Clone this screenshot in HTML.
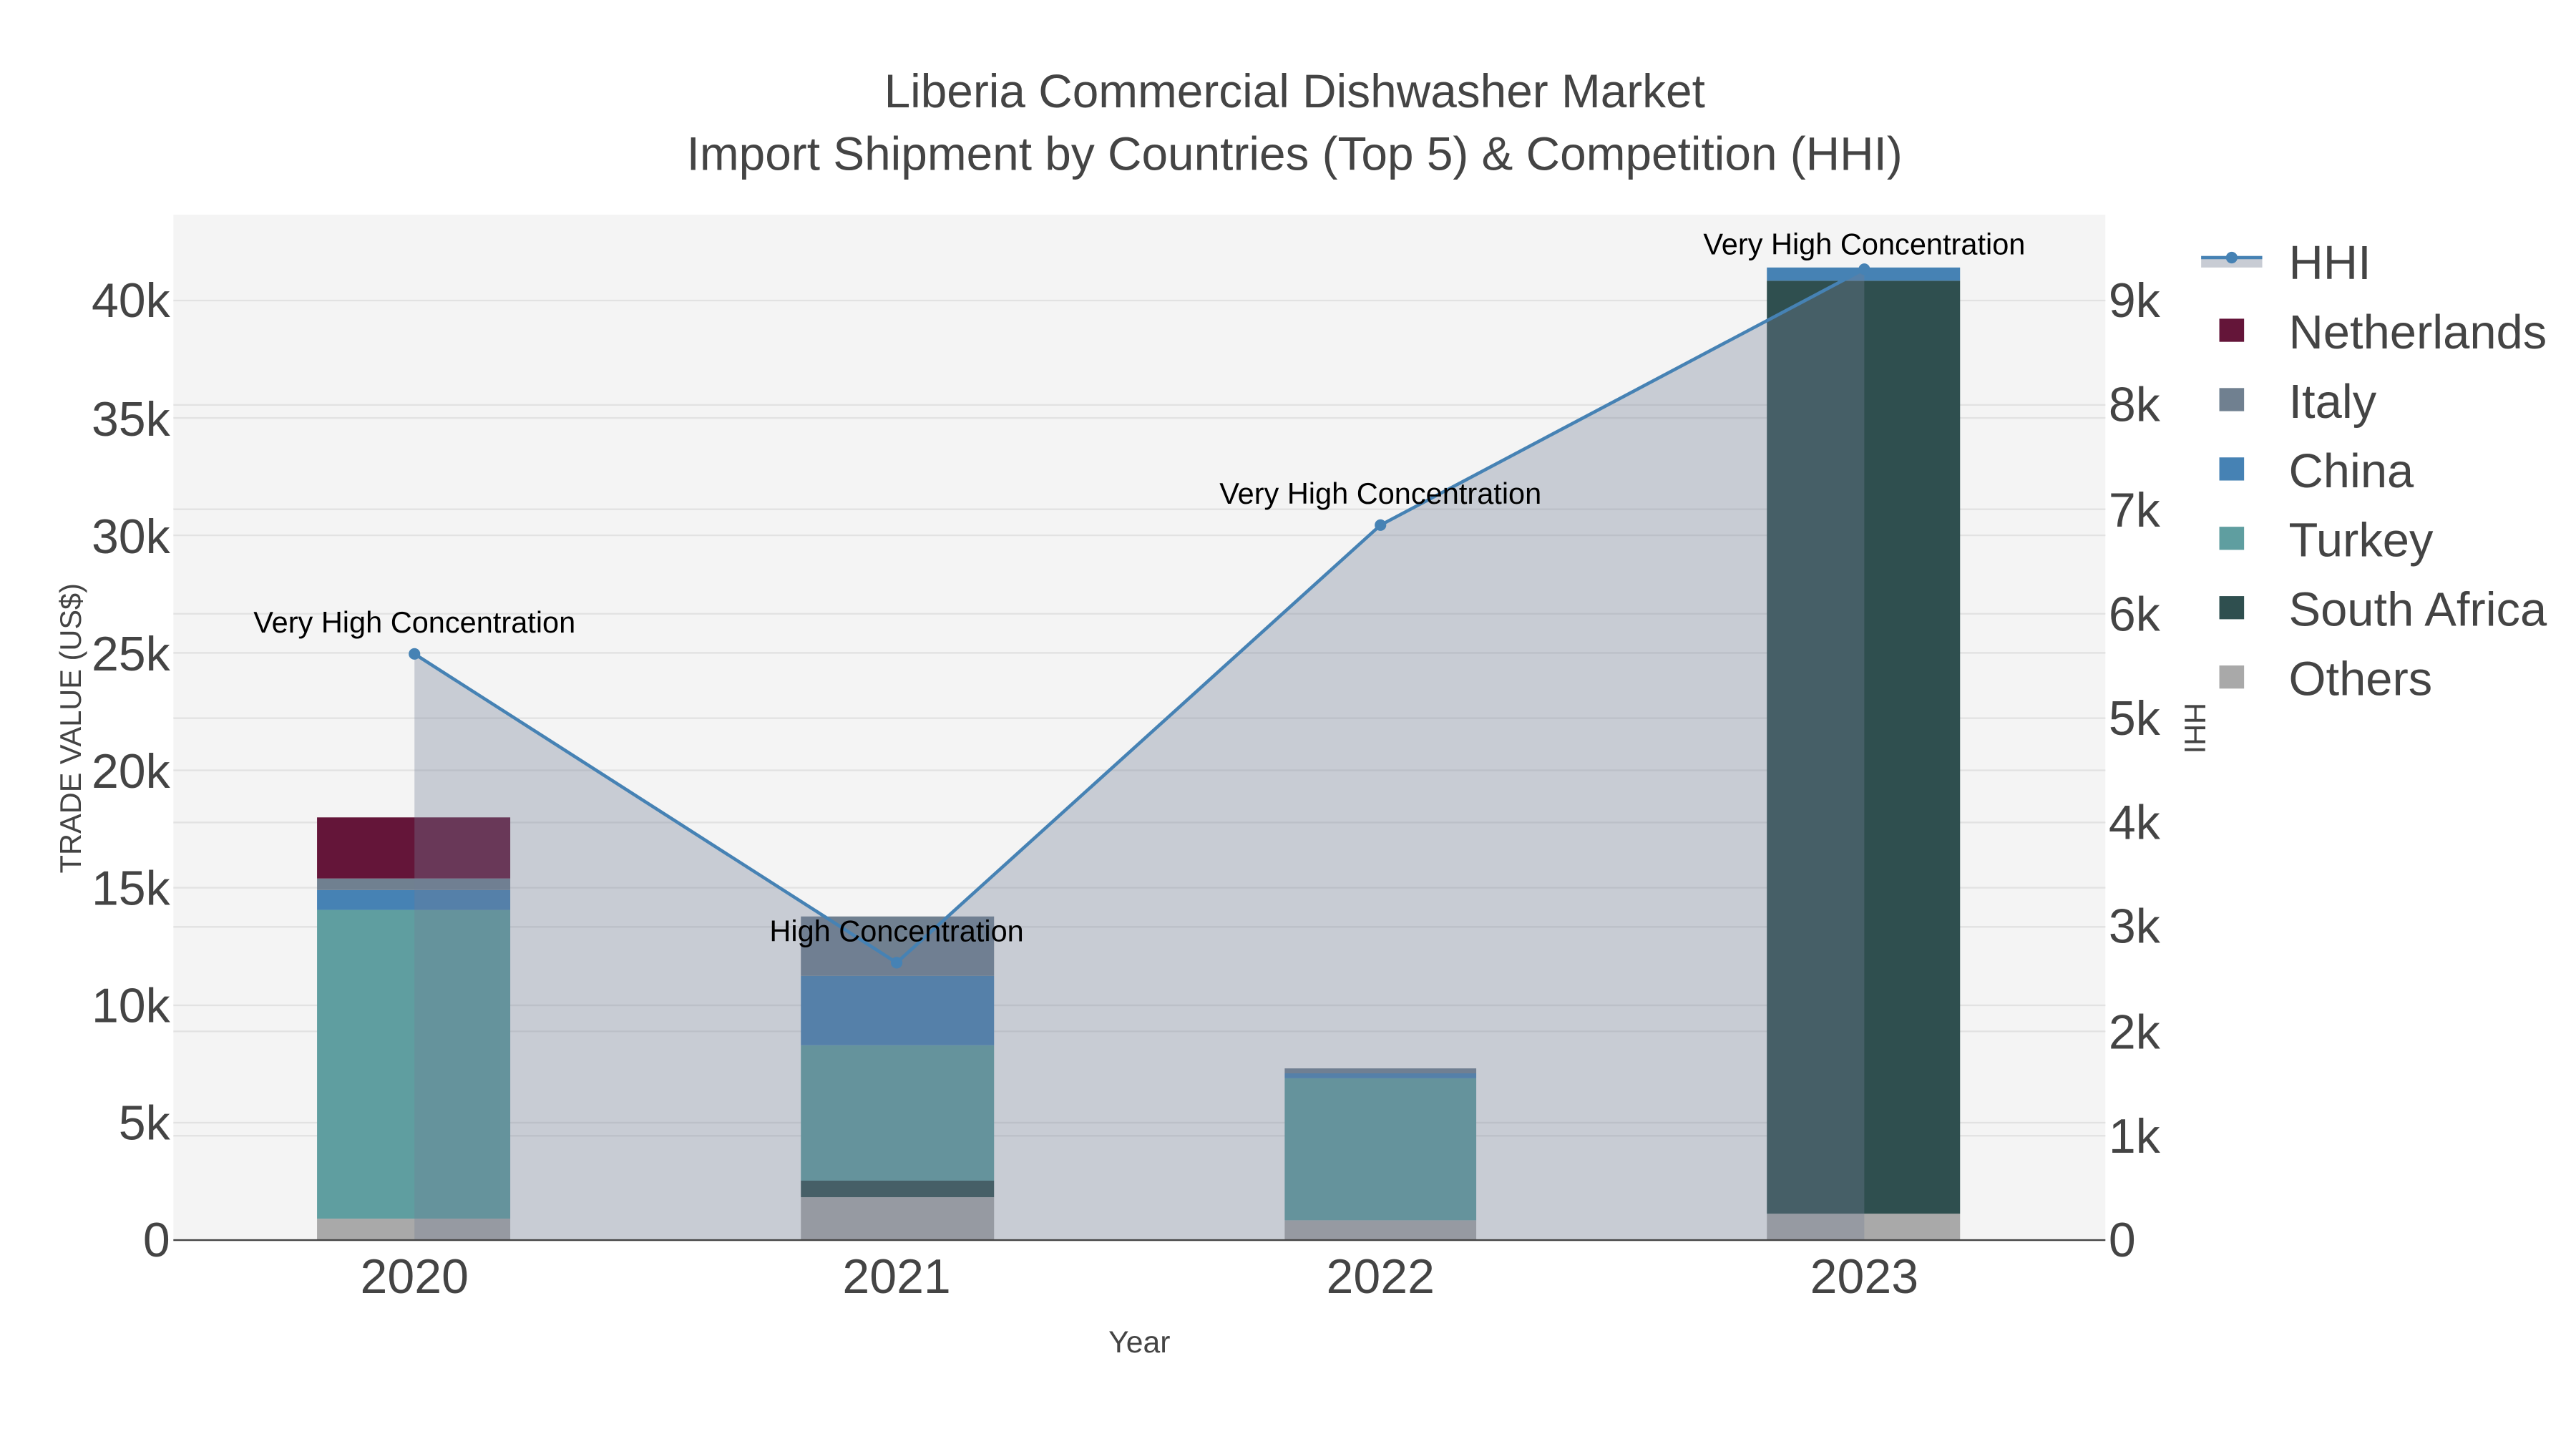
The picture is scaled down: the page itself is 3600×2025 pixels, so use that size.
<!DOCTYPE html>
<html><head><meta charset="utf-8"><style>html,body{margin:0;padding:0;background:#fff}svg{display:block}</style></head>
<body>
<svg width="3600" height="2025" viewBox="0 0 1560 877.5" xmlns="http://www.w3.org/2000/svg" font-family="Liberation Sans, sans-serif">
<rect width="1560" height="877.5" fill="#fff"/>
<rect x="105" y="130" width="1170" height="621" fill="#f4f4f4"/>
<g stroke="#e2e2e2" stroke-width="1">
<line x1="105" x2="1275" y1="679.9" y2="679.9"/><line x1="105" x2="1275" y1="608.8" y2="608.8"/><line x1="105" x2="1275" y1="537.6" y2="537.6"/><line x1="105" x2="1275" y1="466.5" y2="466.5"/><line x1="105" x2="1275" y1="395.4" y2="395.4"/><line x1="105" x2="1275" y1="324.2" y2="324.2"/><line x1="105" x2="1275" y1="253.1" y2="253.1"/><line x1="105" x2="1275" y1="182" y2="182"/>
<line x1="105" x2="1275" y1="687.8" y2="687.8"/><line x1="105" x2="1275" y1="624.6" y2="624.6"/><line x1="105" x2="1275" y1="561.3" y2="561.3"/><line x1="105" x2="1275" y1="498.1" y2="498.1"/><line x1="105" x2="1275" y1="434.9" y2="434.9"/><line x1="105" x2="1275" y1="371.7" y2="371.7"/><line x1="105" x2="1275" y1="308.4" y2="308.4"/><line x1="105" x2="1275" y1="245.2" y2="245.2"/>
</g>
<g>
<rect x="192" y="738" width="117" height="13" fill="#a9a9a9"/>
<rect x="192" y="551" width="117" height="187" fill="#5f9ea0"/>
<rect x="192" y="539" width="117" height="12" fill="#4682b4"/>
<rect x="192" y="532" width="117" height="7" fill="#708090"/>
<rect x="192" y="495" width="117" height="37" fill="#641539"/>
<rect x="485" y="725" width="117" height="26" fill="#a9a9a9"/>
<rect x="485" y="715" width="117" height="10" fill="#2f4f4f"/>
<rect x="485" y="633" width="117" height="82" fill="#5f9ea0"/>
<rect x="485" y="591" width="117" height="42" fill="#4682b4"/>
<rect x="485" y="555" width="117" height="36" fill="#708090"/>
<rect x="778" y="739" width="116" height="12" fill="#a9a9a9"/>
<rect x="778" y="653" width="116" height="86" fill="#5f9ea0"/>
<rect x="778" y="650" width="116" height="3" fill="#4682b4"/>
<rect x="778" y="647" width="116" height="3" fill="#708090"/>
<rect x="1070" y="735" width="117" height="16" fill="#a9a9a9"/>
<rect x="1070" y="170" width="117" height="565" fill="#2f4f4f"/>
<rect x="1070" y="162" width="117" height="8" fill="#4682b4"/>
</g>
<path d="M251 396 L543 583 L836 318 L1129 163 L1129 751 L251 751 Z" fill="rgb(115,126,150)" fill-opacity="0.34"/>
<line x1="105" x2="1275" y1="751" y2="751" stroke="#444" stroke-width="1"/>
<polyline points="251,396 543,583 836,318 1129,163" fill="none" stroke="#4682b4" stroke-width="2"/>
<g fill="#4682b4"><circle cx="251" cy="396" r="3.5"/><circle cx="543" cy="583" r="3.5"/><circle cx="836" cy="318" r="3.5"/><circle cx="1129" cy="163" r="3.5"/></g>
<g font-size="18" fill="#000" text-anchor="middle">
<text x="251" y="383">Very High Concentration</text>
<text x="543" y="570">High Concentration</text>
<text x="836" y="305">Very High Concentration</text>
<text x="1129" y="154">Very High Concentration</text>
</g>
<g font-size="28.5" fill="#444" text-anchor="middle">
<text x="784" y="65">Liberia Commercial Dishwasher Market</text>
<text x="784" y="103">Import Shipment by Countries (Top 5) &amp; Competition (HHI)</text>
</g>
<g font-size="29.5" fill="#444" text-anchor="end">
<text x="103" y="761">0</text><text x="103" y="690">5k</text><text x="103" y="619">10k</text><text x="103" y="548">15k</text><text x="103" y="477">20k</text><text x="103" y="406">25k</text><text x="103" y="335">30k</text><text x="103" y="264">35k</text><text x="103" y="192">40k</text>
</g>
<g font-size="29.5" fill="#444" text-anchor="start">
<text x="1277" y="761">0</text><text x="1277" y="698">1k</text><text x="1277" y="635">2k</text><text x="1277" y="571">3k</text><text x="1277" y="508">4k</text><text x="1277" y="445">5k</text><text x="1277" y="382">6k</text><text x="1277" y="319">7k</text><text x="1277" y="255">8k</text><text x="1277" y="192">9k</text>
</g>
<g font-size="29.5" fill="#444" text-anchor="middle">
<text x="251" y="783">2020</text><text x="543" y="783">2021</text><text x="836" y="783">2022</text><text x="1129" y="783">2023</text>
</g>
<text x="690" y="819" font-size="18.5" fill="#444" text-anchor="middle">Year</text>
<text transform="translate(49,441) rotate(-90)" font-size="18" fill="#444" text-anchor="middle">TRADE VALUE (US$)</text>
<text transform="translate(1323,441) rotate(90)" font-size="18" fill="#444" text-anchor="middle">HHI</text>
<rect x="1333" y="155" width="37" height="7" fill="#c8ccd4"/>
<line x1="1333" x2="1370" y1="156" y2="156" stroke="#4682b4" stroke-width="2"/>
<circle cx="1351.5" cy="156" r="3.5" fill="#4682b4"/>
<rect x="1344" y="193" width="15" height="14" fill="#641539"/>
<rect x="1344" y="235" width="15" height="14" fill="#708090"/>
<rect x="1344" y="277" width="15" height="14" fill="#4682b4"/>
<rect x="1344" y="319" width="15" height="14" fill="#5f9ea0"/>
<rect x="1344" y="361" width="15" height="14" fill="#2f4f4f"/>
<rect x="1344" y="403" width="15" height="14" fill="#a9a9a9"/>
<g font-size="29" fill="#444">
<text x="1386" y="169">HHI</text>
<text x="1386" y="211">Netherlands</text>
<text x="1386" y="253">Italy</text>
<text x="1386" y="295">China</text>
<text x="1386" y="337">Turkey</text>
<text x="1386" y="379">South Africa</text>
<text x="1386" y="421">Others</text>
</g>
</svg>
</body></html>
